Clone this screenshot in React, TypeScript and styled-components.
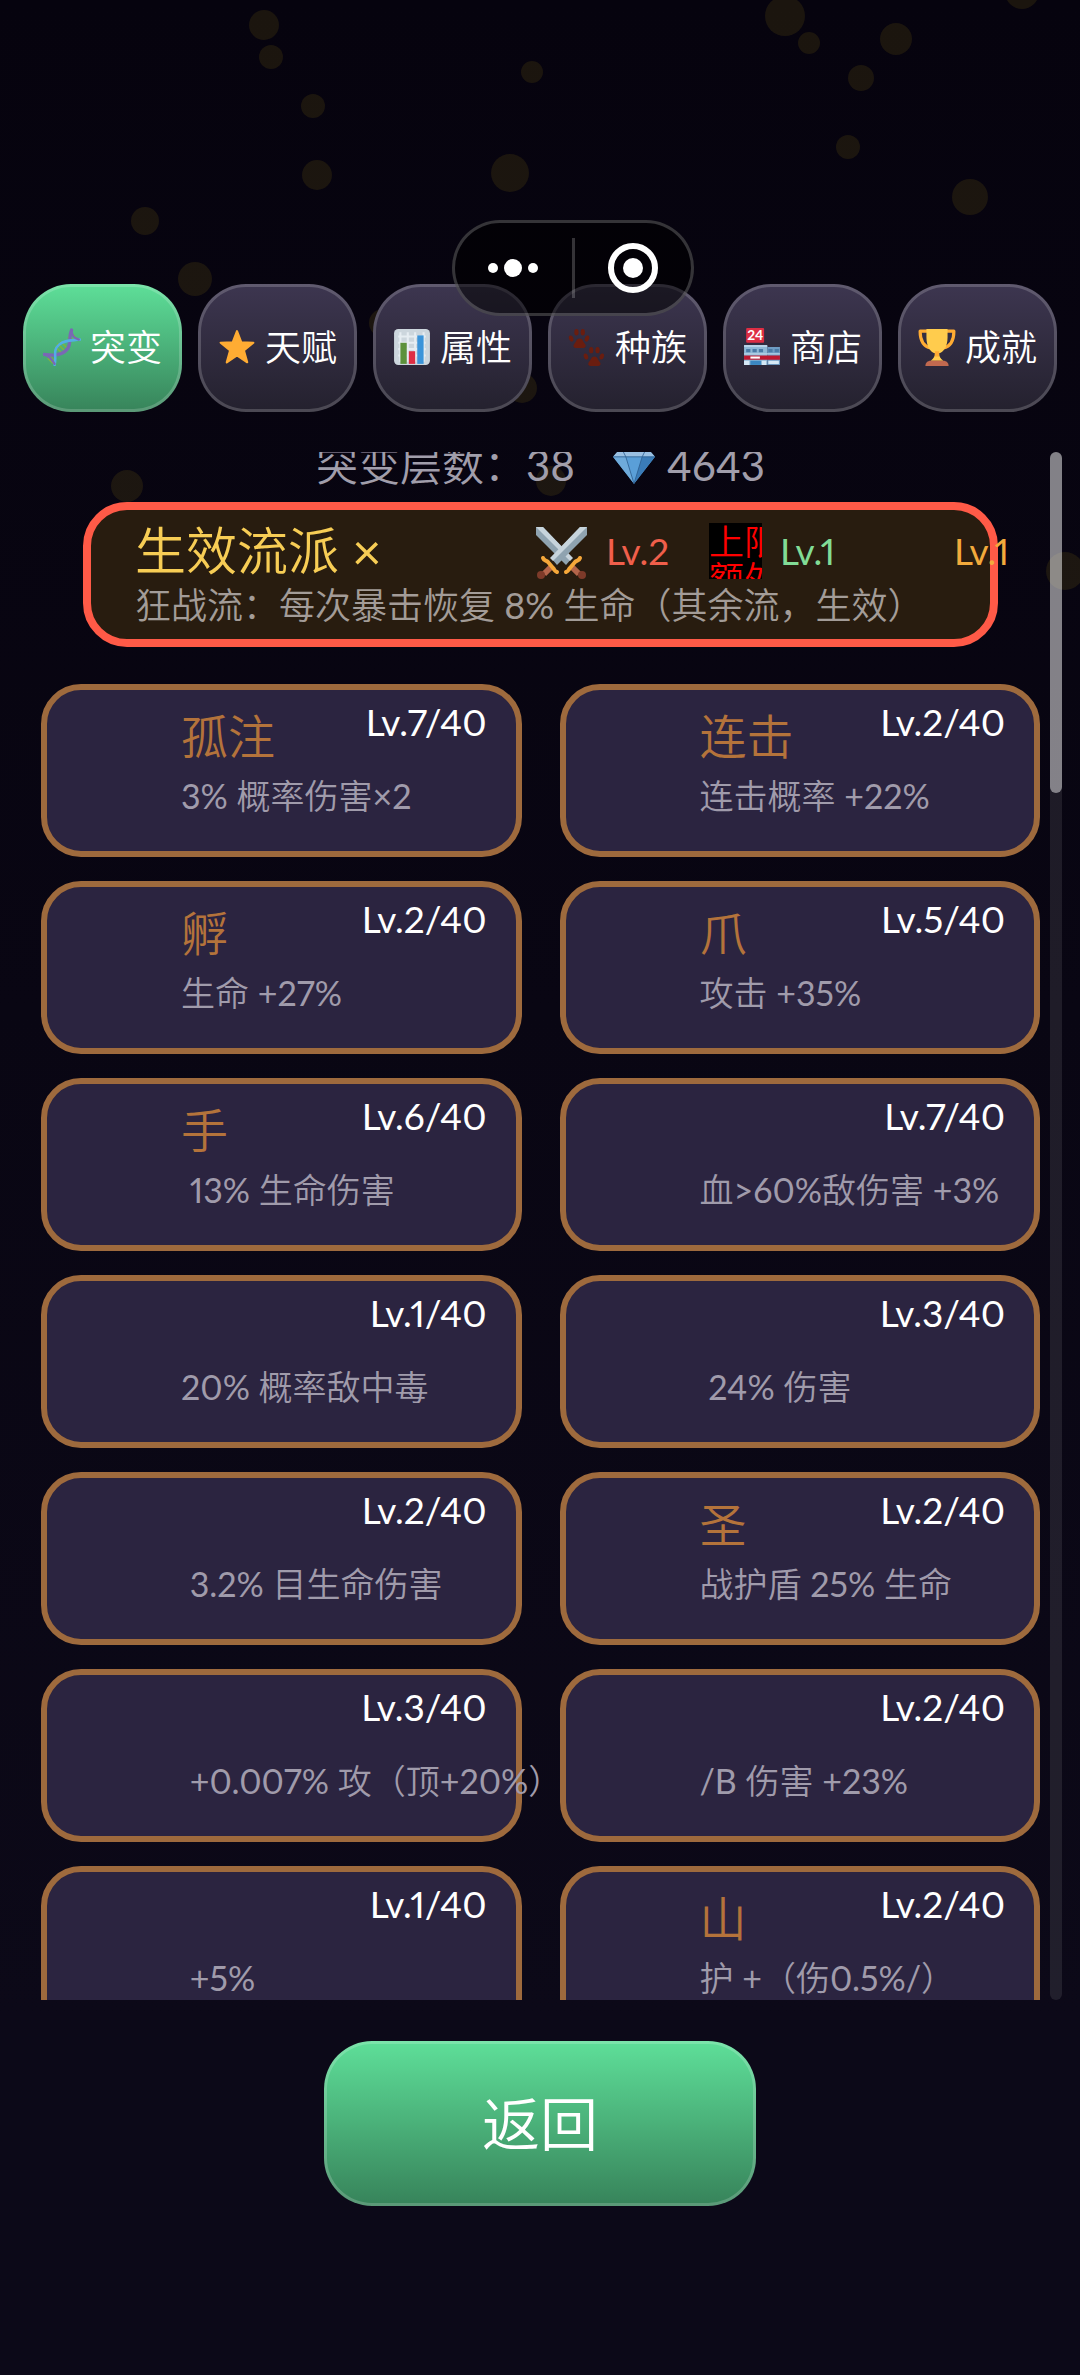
import React from 'react';
import styled, { createGlobalStyle } from 'styled-components';

const GlobalStyle = createGlobalStyle`
  * { box-sizing: border-box; }
  body {
    margin: 0;
    background: #090611;
  }
  button { font: inherit; }
`;

const Page = styled.div`
  position: relative;
  display: flex;
  flex-direction: column;
  height: 100vh;
  overflow: hidden;
  background: linear-gradient(#06030e, #0c0918 85%);
  color: #fff;
  font-family: Lato, 'Noto Sans CJK SC DemiLight', 'Noto Sans CJK SC', sans-serif;
  font-weight: 400;
  font-variant-numeric: proportional-nums;
`;

const Particles = styled.svg`
  position: absolute;
  inset: 0;
  width: 100%;
  height: 100%;
  fill: rgba(255, 215, 20, 0.085);
  pointer-events: none;
`;

const Tabs = styled.nav`
  position: relative;
  display: grid;
  grid-template-columns: repeat(6, 1fr);
  gap: 16px;
  padding: 284px 23px 0;
`;

const Tab = styled.button<{ $active?: boolean }>`
  display: flex;
  align-items: center;
  justify-content: center;
  gap: 9px;
  height: 128px;
  padding: 0 0 2px;
  border: 3px solid rgba(255, 255, 255, 0.18);
  border-radius: 48px;
  background: ${p => (p.$active ? 'linear-gradient(#5edf99, #37835a)' : 'linear-gradient(#3d3650, #24212e)')} border-box;
  color: #fff;
  font-size: 36px;
  line-height: 48px;
  white-space: nowrap;

  svg {
    width: 38px;
    height: 38px;
    flex: none;
  }
`;

const Capsule = styled.div`
  position: absolute;
  top: 220px;
  left: 50%;
  display: flex;
  align-items: center;
  width: 242px;
  height: 96px;
  margin-left: -88px;
  border: 3px solid rgba(255, 255, 255, 0.2);
  border-radius: 48px;
  background: rgba(0, 0, 0, 0.55);
`;

const CapsuleButton = styled.button`
  display: flex;
  flex: 1;
  align-items: center;
  justify-content: center;
  height: 100%;
  padding: 0;
  border: 0;
  background: none;
`;

const CapsuleDivider = styled.span`
  width: 3px;
  height: 60px;
  background: rgba(255, 255, 255, 0.2);
`;

const ListArea = styled.main`
  position: relative;
  display: flex;
  flex: 1;
  min-height: 0;
  margin: 40px 18px 0 0;
`;

const Scroller = styled.div`
  flex: 1;
  min-width: 0;
  padding: 0 10px 0 41px;
  overflow: hidden;
`;

const Track = styled.div`
  flex: none;
  width: 12px;
  border-radius: 6px;
  background: rgba(255, 255, 255, 0.09);
`;

const Thumb = styled.div`
  height: 22%;
  border-radius: 6px;
  background: rgba(255, 255, 255, 0.45);
`;

const Summary = styled.div`
  display: flex;
  align-items: center;
  justify-content: center;
  gap: 38px;
  margin: -17px 0 7px;
  color: #a19eab;
  font-size: 42px;
  line-height: 60px;
`;

const Gems = styled.span`
  display: flex;
  align-items: center;
  gap: 12px;

  svg {
    width: 42px;
    height: 42px;
  }
`;

const Banner = styled.section`
  margin: 0 42px 37px;
  padding: 11px 0 10px 44px;
  border: 8px solid #ff5a47;
  border-radius: 44px;
  background: #281c0f;
`;

const BannerRow = styled.div`
  display: flex;
  align-items: center;
  height: 60px;
`;

const BannerTitle = styled.h2`
  flex: none;
  width: 400px;
  margin: 0;
  color: #f7cd55;
  font-size: 51px;
  font-weight: 400;
  line-height: 60px;
`;

const BannerText = styled.p`
  margin: 0;
  color: #a39c98;
  font-size: 36px;
  line-height: 48px;
  white-space: nowrap;
`;

const Schools = styled.div`
  display: grid;
  grid-auto-flow: column;
  grid-auto-columns: 174px;
  align-items: center;
`;

const School = styled.span<{ $color: string }>`
  display: flex;
  align-items: center;
  gap: 18px;
  color: ${p => p.$color};
  font-size: 37px;
  line-height: 48px;
`;

const SchoolIcon = styled.span`
  flex: none;
  width: 53px;
  height: 56px;

  svg {
    width: 53px;
    height: 56px;
  }
`;

const BrokenIcon = styled(SchoolIcon)`
  overflow: hidden;
  background: #000;
  color: #f00;
  font-size: 35px;
  line-height: 37px;
  white-space: pre;
`;

const Grid = styled.ul`
  display: grid;
  grid-template-columns: 1fr 1fr;
  gap: 24px 38px;
  margin: 0;
  padding: 0;
  list-style: none;
`;

const Card = styled.li`
  min-width: 0;
  height: 173px;
  padding: 18px 29px 0 134px;
  border: 6px solid #9e6a3d;
  border-radius: 40px;
  background: #2b2440;
`;

const CardHead = styled.div`
  display: flex;
  align-items: flex-start;
  justify-content: space-between;
  height: 56px;
  margin-bottom: 12px;
`;

const CardTitle = styled.h3`
  margin: 0;
  color: #b4733b;
  font-size: 47px;
  font-weight: 400;
  line-height: 56px;
`;

const CardLevel = styled.span`
  margin-left: auto;
  font-size: 37px;
  line-height: 28px;
`;

const CardText = styled.p`
  margin: 0;
  color: #a09bab;
  font-size: 34px;
  line-height: 40px;
  white-space: pre;
`;

const Footer = styled.footer`
  position: relative;
  display: flex;
  justify-content: center;
  padding: 41px 0 169px;
`;

const BackButton = styled.button`
  width: 40%;
  height: 165px;
  border: 3px solid rgba(255, 255, 255, 0.18);
  border-radius: 48px;
  background: linear-gradient(#5edf99, #37835a) border-box;
  color: #fff;
  font-size: 58px;
  line-height: 72px;
`;

const DnaIcon = () => (
  <svg viewBox="0 0 36 36" aria-hidden="true" fill="none" strokeLinecap="round">
    <path d="M26 4l4 4M24 9l5 2M14 15l6 6M12 18l5 5M17 13l6 6M6 26l5 5M5 29l4 4" stroke="#7cb342" strokeWidth="1.6" />
    <path d="M1 25c7 1 16 2 22-5 4-5 1-11 4-18" stroke="#7a68b5" strokeWidth="3.2" />
    <path d="M11 35c2-8-2-14 4-19 5-5 12-4 20-5" stroke="#53aee6" strokeWidth="2.4" />
    <path d="M27 2c0 5 3 8 7 9M1 25c4 1 7 4 10 9" stroke="#7a68b5" strokeWidth="2" />
  </svg>
);

const StarIcon = () => (
  <svg viewBox="0 0 36 36" aria-hidden="true">
    <path
      d="M18 3l4 10.500 11.500.5-9 7.200 3.200 11.300L18 26l-9.700 6.500 3.200-11.300-9-7.200 11.500-.5z"
      fill="#ffac33"
      stroke="#ffac33"
      strokeWidth="2"
      strokeLinejoin="round"
    />
  </svg>
);

const ChartIcon = () => (
  <svg viewBox="0 0 36 36" aria-hidden="true">
    <rect x="1" y="1" width="34" height="34" rx="4" fill="#ccd6dd" />
    <path d="M5 8h26M5 14h26M5 20h26M5 26h26M7 4v28M14 4v28M21 4v28M29 4v28" stroke="#e6edf2" strokeWidth="2" />
    <path d="M7 14h6v20H7z" fill="#5c913b" />
    <path d="M15 22h6v12h-6z" fill="#dd2e44" />
    <path d="M23 7h6v27h-6z" fill="#3b94d9" />
  </svg>
);

const PawIcon = () => (
  <svg viewBox="0 0 36 36" aria-hidden="true" fill="#6a1d0f">
    <g id="paw">
      <path d="M11 10c3 0 3 3 5 5 2 3 0 4-2 4h-6c-2 0-4-1-2-4 2-2 2-5 5-5z" />
      <ellipse cx="3" cy="10" rx="2" ry="3" transform="rotate(-20 3 10)" />
      <ellipse cx="8" cy="4" rx="2" ry="3" />
      <ellipse cx="14" cy="4" rx="2" ry="3" />
      <ellipse cx="18" cy="10" rx="2" ry="3" transform="rotate(20 18 10)" />
    </g>
    <use href="#paw" x="14" y="17" />
  </svg>
);

const ShopIcon = () => (
  <svg viewBox="0 0 36 36" aria-hidden="true">
    <rect x="3" y="0" width="17" height="14" rx="1" fill="#dd2e44" />
    <text x="11.500" y="11.500" fill="#fff" fontSize="13" fontWeight="700" textAnchor="middle">24</text>
    <path d="M1 17h22v18H1z" fill="#8fb9d6" />
    <path d="M23 18h12v17H23z" fill="#6f9cc4" />
    <path d="M1 16h22v2H1zM1 24h34v1H1z" fill="#b8d4e8" />
    <path d="M3 20h4v3H3zM9 20h4v3H9zM15 20h4v3h-4zM24 20h4v3h-4zM30 20h4v3h-4z" fill="#4a7ba6" />
    <path d="M1 26h34v4H1z" fill="#be1931" />
    <path d="M7 27h9v2H7z" fill="#fff" />
    <path d="M1 31h5v4H1zM18 31h4v4h-4zM24 31h10v3H24z" fill="#d5e8f5" />
    <path d="M7 31h10v4H7z" fill="#3b88c3" />
  </svg>
);

const TrophyIcon = () => (
  <svg viewBox="0 0 36 36" aria-hidden="true">
    <path d="M9 3H2c0 8 2 14 10 16M27 3h7c0 8-2 14-10 16" fill="none" stroke="#ffac33" strokeWidth="3" strokeLinejoin="round" />
    <path d="M8 1h20v8c0 9-4 14-8 15 0 3 1 5 4 7H12c3-2 4-4 4-7-4-1-8-6-8-15z" fill="#ffcc4d" />
    <path d="M16 22h4v5h-4z" fill="#ffac33" />
    <path d="M7 36c0-3 2-5 5-5h12c3 0 5 2 5 5z" fill="#c1694f" />
  </svg>
);

const GemIcon = () => (
  <svg viewBox="0 0 36 36" aria-hidden="true">
    <path d="M7 3h22l7 8-18 23L0 11z" fill="#5a9fd8" />
    <path d="M7 3h22l7 8H0z" fill="#9ac0e2" />
    <path d="M0 11h11l7 23z" fill="#6fabdb" />
    <path d="M25 11h11L18 34z" fill="#3a7cb8" />
    <path d="M11 11l-4-8h22l-4 8M11 11l7 23 7-23M0 11h36" fill="none" stroke="#2d5f8f" strokeWidth="0.700" />
  </svg>
);

const SwordsIcon = () => (
  <svg viewBox="0 0 53 56" aria-hidden="true">
    <g id="sword">
      <path d="M1 4V12L31 42 37 35 8 4z" fill="#8fa3b0" />
      <path d="M1 4h7L38 35l-3 3z" fill="#c7d4dc" />
      <path d="M37 44l7 7" stroke="#b3644a" strokeWidth="6" />
      <path d="M45 35c-1 3-3 2-5 4l-5 6c-2 2-1 3-4 4" fill="none" stroke="#f5a73a" strokeWidth="4" strokeLinecap="round" />
      <circle cx="47" cy="52" r="4" fill="#7d3a29" />
    </g>
    <use href="#sword" transform="matrix(-1 0 0 1 53 0)" />
  </svg>
);

const MoreIcon = () => (
  <svg width="52" height="20" viewBox="0 0 52 20" fill="#fff" aria-hidden="true">
    <circle cx="6" cy="10" r="5" />
    <circle cx="26" cy="10" r="9" />
    <circle cx="46" cy="10" r="5" />
  </svg>
);

const CloseIcon = () => (
  <svg width="52" height="52" viewBox="0 0 52 52" aria-hidden="true">
    <circle cx="26" cy="26" r="22" fill="none" stroke="#fff" strokeWidth="6" />
    <circle cx="26" cy="26" r="10" fill="#fff" />
  </svg>
);

const particles = [
  [264, 25, 15], [271, 57, 12], [313, 106, 12], [317, 175, 15], [145, 221, 14],
  [195, 279, 17], [532, 72, 11], [510, 173, 19], [785, 16, 20], [809, 43, 11],
  [896, 39, 16], [861, 78, 13], [848, 147, 12], [970, 197, 18], [1022, -8, 17],
  [383, 323, 14], [522, 388, 15], [127, 486, 16], [551, 481, 15], [1065, 571, 19],
];

const tabs = [
  { label: '突变', Icon: DnaIcon },
  { label: '天赋', Icon: StarIcon },
  { label: '属性', Icon: ChartIcon },
  { label: '种族', Icon: PawIcon },
  { label: '商店', Icon: ShopIcon },
  { label: '成就', Icon: TrophyIcon },
];

const mutations = [
  { title: '孤注', level: 7, text: '3% 概率伤害×2' },
  { title: '连击', level: 2, text: '连击概率 +22%' },
  { title: '孵', level: 2, text: '生命 +27%' },
  { title: '爪', level: 5, text: '攻击 +35%' },
  { title: '手', level: 6, text: ' 13% 生命伤害' },
  { title: '', level: 7, text: '血>60%敌伤害 +3%' },
  { title: '', level: 1, text: '20% 概率敌中毒' },
  { title: '', level: 3, text: ' 24% 伤害' },
  { title: '', level: 2, text: ' 3.2% 目生命伤害' },
  { title: '圣', level: 2, text: '战护盾 25% 生命' },
  { title: '', level: 3, text: ' +0.007% 攻（顶+20%）' },
  { title: '', level: 2, text: '/B 伤害 +23%' },
  { title: '', level: 1, text: ' +5%' },
  { title: '山', level: 2, text: '护 +（伤0.5%/）' },
];

export default function App() {
  return (
    <Page>
      <GlobalStyle />
      <Particles aria-hidden="true">
        {particles.map(([x, y, r]) => (
          <circle key={`${x}-${y}`} cx={x} cy={y} r={r} />
        ))}
      </Particles>

      <Tabs>
        {tabs.map(({ label, Icon }, i) => (
          <Tab key={label} type="button" $active={i === 0}>
            <Icon />
            {label}
          </Tab>
        ))}
      </Tabs>

      <ListArea>
        <Scroller>
          <Summary>
            <span>突变层数：38</span>
            <Gems>
              <GemIcon />
              4643
            </Gems>
          </Summary>

          <Banner>
            <BannerRow>
              <BannerTitle>生效流派 ×</BannerTitle>
              <Schools>
                <School $color="#f05f4b">
                  <SchoolIcon><SwordsIcon /></SchoolIcon>
                  Lv.2
                </School>
                <School $color="#82dc96">
                  <BrokenIcon>{'上限\n额外'}</BrokenIcon>
                  Lv.1
                </School>
                <School $color="#f2aa3c">
                  <SchoolIcon />
                  Lv.1
                </School>
              </Schools>
            </BannerRow>
            <BannerText>狂战流：每次暴击恢复 8% 生命（其余流，生效）</BannerText>
          </Banner>

          <Grid>
            {mutations.map((m, i) => (
              <Card key={i}>
                <CardHead>
                  {m.title && <CardTitle>{m.title}</CardTitle>}
                  <CardLevel>Lv.{m.level}/40</CardLevel>
                </CardHead>
                <CardText>{m.text}</CardText>
              </Card>
            ))}
          </Grid>
        </Scroller>
        <Track>
          <Thumb />
        </Track>
      </ListArea>

      <Footer>
        <BackButton type="button">返回</BackButton>
      </Footer>

      <Capsule>
        <CapsuleButton type="button" aria-label="更多"><MoreIcon /></CapsuleButton>
        <CapsuleDivider />
        <CapsuleButton type="button" aria-label="关闭"><CloseIcon /></CapsuleButton>
      </Capsule>
    </Page>
  );
}
